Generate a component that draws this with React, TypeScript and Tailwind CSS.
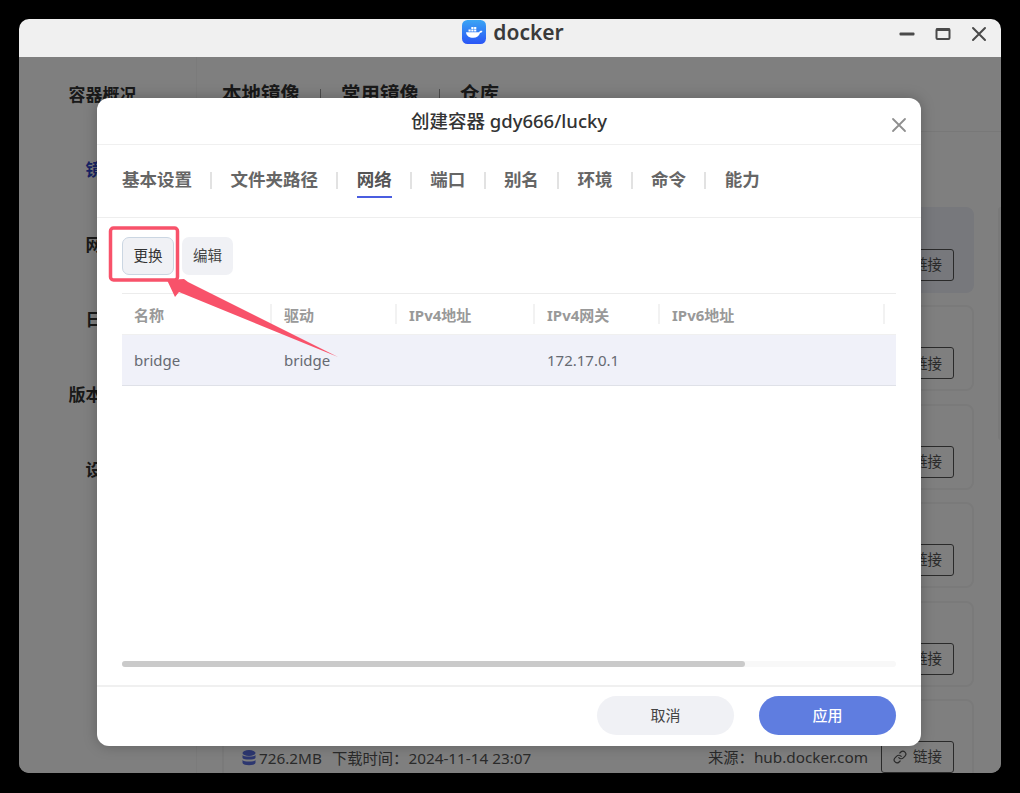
import { Fragment } from "react";
import { Link as LinkIcon } from "lucide-react";

const FONT = "font-['Noto_Sans','Noto_Sans_CJK_SC',sans-serif]";

const SIDE_ITEMS = [
  { label: "容器概况", active: false },
  { label: "镜像", active: true },
  { label: "网络", active: false },
  { label: "日志", active: false },
  { label: "版本管理", active: false },
  { label: "设置", active: false },
];

const MAIN_TABS = ["本地镜像", "常用镜像", "仓库"];
const MODAL_TABS = ["基本设置", "文件夹路径", "网络", "端口", "别名", "环境", "命令", "能力"];

const COLUMNS = [
  { title: "名称", value: "bridge" },
  { title: "驱动", value: "bridge" },
  { title: "IPv4地址", value: "" },
  { title: "IPv4网关", value: "172.17.0.1" },
  { title: "IPv6地址", value: "" },
  { title: "", value: "" },
];

function DockerLogo() {
  return (
    <svg width="24" height="24" viewBox="0 0 24 24">
      <defs>
        <linearGradient id="dockerBg" x1="0" y1="0" x2="0" y2="1">
          <stop offset="0" stopColor="#3aa5f4" />
          <stop offset="1" stopColor="#2a55f6" />
        </linearGradient>
      </defs>
      <rect width="24" height="24" rx="5.5" fill="url(#dockerBg)" />
      <path
        d="M4 12.2h13.2c.3-1 1-1.5 2-1.5.5 0 1 .1 1.3.4-.4 1.2-1.3 1.9-2.500 2-.9 3-3.300 4.700-6.800 4.700-4 0-6.800-2-7.200-5.600z"
        fill="#fff"
      />
      <path d="M6.500 9.500h2.200v2H6.500zM9.300 9.500h2.200v2H9.300zM12.100 9.500h2.200v2h-2.200zM9.300 6.900h2.200v2H9.300zM12.100 6.900h2.200v2h-2.200z" fill="#fff" />
    </svg>
  );
}

function WindowControls() {
  return (
    <div className="flex items-center gap-[20px] pr-[14px] pt-[7px]">
      <svg width="16" height="16" viewBox="0 0 16 16">
        <rect x="0.500" y="6.500" width="15" height="3" rx="1" fill="#4a4a4a" />
      </svg>
      <svg width="16" height="16" viewBox="0 0 16 16">
        <rect x="1.500" y="3" width="13" height="10" rx="1" fill="none" stroke="#4a4a4a" strokeWidth="2" />
        <rect x="1" y="2.500" width="14" height="2.500" fill="#4a4a4a" />
      </svg>
      <svg width="16" height="16" viewBox="0 0 16 16">
        <path d="M2 2l12 12M14 2L2 14" stroke="#4a4a4a" strokeWidth="2" strokeLinecap="round" />
      </svg>
    </div>
  );
}

function ImageCard({ selected, meta }: { selected?: boolean; meta?: boolean }) {
  return (
    <div
      className={`flex h-[86px] shrink-0 items-end justify-between rounded-[8px] border-2 pb-[10px] pl-[18px] pr-[18px] ${
        selected ? "border-[#eef0f8] bg-[#eef0f8]" : "border-[#f4f4f4]"
      }`}
    >
      {meta ? (
        <div className="flex items-center text-[15.300px] leading-[30px] text-[#555]">
          <svg width="14" height="16" viewBox="0 0 14 16" className="mr-[4px]">
            <ellipse cx="7" cy="3" rx="6.500" ry="3" fill="#5a6fe0" />
            <path d="M.5 5c1 2 12 2 13 0v3c-1 2-12 2-13 0z" fill="#5a6fe0" />
            <path d="M.5 10c1 2 12 2 13 0v3c-1 3-12 3-13 0z" fill="#5a6fe0" />
          </svg>
          <span className="-ml-[1px]">726.2MB</span>
          <span className="ml-[10px]">下载时间：2024-11-14 23:07</span>
        </div>
      ) : (
        <div />
      )}
      <div className="flex items-center gap-[13px]">
        {meta && <span className="text-[15.300px] leading-[30px] text-[#555]">来源：hub.docker.com</span>}
        <button className="flex h-[32px] w-[73px] items-center justify-center gap-[6px] rounded-[3px] border border-[#555] text-[14.500px] text-[#555]">
          <LinkIcon size={14} strokeWidth={2} />
          链接
        </button>
      </div>
    </div>
  );
}

function Background() {
  return (
    <div className="flex h-full bg-white">
      <div className="flex w-[178px] shrink-0 flex-col items-center gap-[51px] border-r border-[#f6f6f6] pr-[10px] pt-[26px]">
        {SIDE_ITEMS.map((item) => (
          <div
            key={item.label}
            className={`h-[24px] text-[17px] leading-[24px] font-bold ${item.active ? "text-[#2f45c8]" : "text-[#333]"}`}
          >
            {item.label}
          </div>
        ))}
      </div>
      <div className="flex min-w-0 flex-1 flex-col">
        <div className="flex h-[75px] shrink-0 items-start gap-[20px] border-b border-[#f0f0f0] pl-[25px] pt-[23px]">
          {MAIN_TABS.map((tab, i) => (
            <Fragment key={tab}>
              {i > 0 && <span className="mt-[9px] h-[14px] w-px bg-[#999]" />}
              <span className="text-[19.500px] leading-[28px] font-bold text-[#333]">{tab}</span>
            </Fragment>
          ))}
        </div>
        <div className="flex min-h-0 flex-1">
          <div className="flex w-[777px] shrink-0 flex-col gap-[12.400px] overflow-hidden pl-[25px] pt-[75px]">
            <ImageCard selected />
            <ImageCard />
            <ImageCard />
            <ImageCard />
            <ImageCard />
            <ImageCard meta />
          </div>
          <div className="ml-auto mt-[75px] h-[233px] w-[3px] rounded-l bg-[#f2f2f2]" />
        </div>
      </div>
    </div>
  );
}

function NetworkTable() {
  return (
    <div className="mx-[25px] mt-[18px] border-t border-[#ececec]">
      <div className="grid h-[41px] grid-cols-[150px_125px_138px_125px_225px_11px] items-center border-b border-[#f0f0f0]">
        {COLUMNS.map((col, i) => (
          <div key={i} className="flex h-[20px] items-center justify-between pl-[12px] text-[15px] font-bold text-[#999]">
            <span className="pt-[3px]">{col.title}</span>
            {i < 5 && <span className="h-[20px] w-[2px] bg-[#f2f2f2]" />}
          </div>
        ))}
      </div>
      <div className="grid h-[51px] grid-cols-[150px_125px_138px_125px_225px_11px] items-center border-b border-[#dfe1e8] bg-[#f0f1f9]">
        {COLUMNS.map((col, i) => (
          <div key={i} className="pl-[12px] text-[15px] text-[#666a72]">
            {col.value}
          </div>
        ))}
      </div>
    </div>
  );
}

function Annotation() {
  return (
    <svg
      className="pointer-events-none absolute left-0 top-0"
      width="824"
      height="648"
      viewBox="97 98 824 648"
    >
      <rect x="110.500" y="228" width="67" height="52" rx="3" fill="none" stroke="#f8526a" strokeWidth="3.500" />
      <polygon
        points="167,280 184,279 188,282 338,357 179,292 175,297"
        fill="#f8526a"
      />
    </svg>
  );
}

function Modal() {
  return (
    <div className="absolute left-[78px] top-[79px] flex h-[648px] w-[824px] flex-col rounded-[12px] bg-white shadow-[0_0_14px_rgba(0,0,0,0.25)]">
      <div className="relative flex h-[47px] shrink-0 items-center justify-center border-b border-[#f0f0f0]">
        <span className="text-[18.500px] font-medium text-[#333]">创建容器 gdy666/lucky</span>
        <svg width="16" height="16" viewBox="0 0 16 16" className="absolute right-[14px] top-[19px]">
          <path d="M2 2l12 12M14 2L2 14" stroke="#8f8f8f" strokeWidth="1.800" strokeLinecap="round" />
        </svg>
      </div>

      <div className="flex h-[73px] shrink-0 items-start gap-[18.300px] border-b border-[#eeeeee] pl-[25px] pt-[21px]">
        {MODAL_TABS.map((tab, i) => (
          <Fragment key={tab}>
            {i > 0 && <span className="mt-[6px] h-[17px] w-[2px] bg-[#e2e2e2]" />}
            <span
              className={`h-[32px] border-b-2 text-[17.500px] leading-[27px] font-bold ${
                tab === "网络" ? "border-[#4a5de0] text-[#555]" : "border-transparent text-[#666]"
              }`}
            >
              {tab}
            </span>
          </Fragment>
        ))}
      </div>

      <div className="flex gap-[8px] pl-[25px] pt-[19px]">
        <button className="h-[38px] w-[52px] rounded-[7px] border border-[#cbd6e2] bg-[#f0f1f5] text-[14.500px] text-[#333]">
          更换
        </button>
        <button className="h-[38px] w-[51px] rounded-[7px] bg-[#f0f1f5] text-[14.500px] text-[#444]">编辑</button>
      </div>

      <NetworkTable />

      <div className="mx-[25px] mt-auto h-[6px] rounded-full bg-[#f8f8f8]">
        <div className="h-[6px] w-[623px] rounded-full bg-[#cacaca]" />
      </div>

      <div className="mt-[18px] flex h-[61px] shrink-0 items-start justify-end gap-[25px] border-t-2 border-[#f0f0f0] pr-[25px] pt-[9px]">
        <button className="h-[39px] w-[137px] rounded-full bg-[#f0f1f5] text-[15px] text-[#444]">取消</button>
        <button className="h-[39px] w-[137px] rounded-full bg-[#5f7de0] text-[15px] font-medium text-white">应用</button>
      </div>

      <Annotation />
    </div>
  );
}

export default function App() {
  return (
    <div className={`h-[793px] w-[1020px] overflow-hidden bg-black pl-[19px] pt-[19px] ${FONT}`}>
      <div className="relative flex h-[754px] w-[982px] flex-col overflow-hidden rounded-[10px]">
        <div className="flex h-[38px] shrink-0 items-start bg-[#f0f0f0]">
          <div className="flex-1" />
          <div className="flex items-center gap-[7px] pl-[6px] pt-px">
            <DockerLogo />
            <span className="text-[21px] leading-[24px] font-semibold text-[#3a3a3a]">docker</span>
          </div>
          <div className="flex flex-1 justify-end">
            <WindowControls />
          </div>
        </div>
        <div className="relative min-h-0 flex-1">
          <Background />
          <div className="absolute inset-0 bg-black/50" />
        </div>
        <Modal />
      </div>
    </div>
  );
}
